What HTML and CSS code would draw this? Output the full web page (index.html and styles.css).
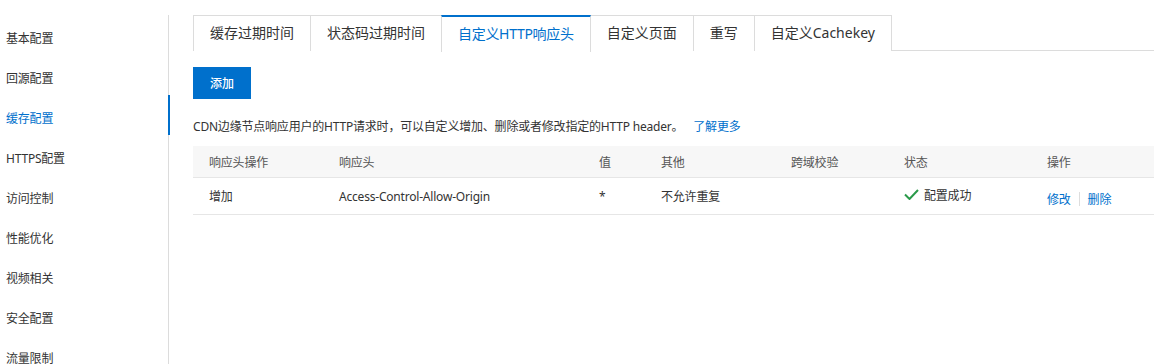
FILE: index.html
```html
<!DOCTYPE html>
<html lang="zh-CN">
<head>
<meta charset="utf-8">
<title>CDN 缓存配置</title>
<link rel="stylesheet" href="styles.css">
</head>
<body>
<div class="page">
  <nav class="sidebar">
    <a class="side-item">基本配置</a>
    <a class="side-item">回源配置</a>
    <a class="side-item active">缓存配置</a>
    <a class="side-item">HTTPS配置</a>
    <a class="side-item">访问控制</a>
    <a class="side-item">性能优化</a>
    <a class="side-item">视频相关</a>
    <a class="side-item">安全配置</a>
    <a class="side-item">流量限制</a>
  </nav>
  <main class="main">
    <div class="tabs">
      <div class="tab">缓存过期时间</div>
      <div class="tab">状态码过期时间</div>
      <div class="tab active">自定义HTTP响应头</div>
      <div class="tab">自定义页面</div>
      <div class="tab">重写</div>
      <div class="tab">自定义Cachekey</div>
    </div>
    <button class="btn-primary">添加</button>
    <p class="desc">CDN边缘节点响应用户的HTTP请求时，可以自定义增加、删除或者修改指定的HTTP header。<a class="link more">了解更多</a></p>
    <div class="table">
      <div class="tr thead">
        <div class="td">响应头操作</div>
        <div class="td">响应头</div>
        <div class="td">值</div>
        <div class="td">其他</div>
        <div class="td">跨域校验</div>
        <div class="td">状态</div>
        <div class="td">操作</div>
      </div>
      <div class="tr tbody">
        <div class="td">增加</div>
        <div class="td">Access-Control-Allow-Origin</div>
        <div class="td">*</div>
        <div class="td">不允许重复</div>
        <div class="td"></div>
        <div class="td status"><svg class="check" width="15" height="11" viewBox="0 0 15 11"><path d="M1 5.5 L5.5 10 L14 1" fill="none" stroke="#2a9a4a" stroke-width="2"/></svg>配置成功</div>
        <div class="td ops"><a class="link">修改</a><span class="sep"></span><a class="link">删除</a></div>
      </div>
    </div>
  </main>
</div>
</body>
</html>
```
FILE: styles.css
```css
* { box-sizing: border-box; }
html, body { margin: 0; padding: 0; background: #fff; }
body {
  font-family: "Noto Sans", "Noto Sans CJK SC", sans-serif;
  font-size: 12px;
  letter-spacing: -0.2px;
  color: #333;
  width: 1154px;
  height: 364px;
  overflow: hidden;
}
.page {
  display: flex;
  padding-top: 15px;
  height: 364px;
}
.sidebar {
  width: 169px;
  flex: none;
  border-right: 1px solid #dcdcdc;
  display: flex;
  flex-direction: column;
}
.side-item {
  position: relative;
  display: block;
  height: 40px;
  padding: 8px 0 0 6px;
  line-height: 32px;
  color: #333;
  font-size: 12px;
}
.side-item.active { color: #0070cc; }
.side-item.active::after {
  content: "";
  position: absolute;
  right: -2px;
  top: 0;
  width: 2px;
  height: 40px;
  background: #0070cc;
}
.main {
  flex: 1;
  padding-left: 24px;
  min-width: 0;
}
.tabs {
  display: flex;
  border-bottom: 1px solid #dcdcdc;
  height: 36px;
}
.tab {
  height: 36px;
  padding: 0 16px;
  border: 1px solid #dcdcdc;
  border-bottom: none;
  margin-right: -1px;
  font-size: 14px;
  letter-spacing: 0;
  line-height: 34px;
  color: #333;
  background: #fff;
}
.tab.active {
  border-top: 2px solid #0070cc;
  line-height: 33px;
  color: #0070cc;
  height: 37px;
  letter-spacing: -0.3px;
  position: relative;
  z-index: 1;
}
.btn-primary {
  display: block;
  margin-top: 16px;
  width: 58px;
  height: 32px;
  border: none;
  background: #0070cc;
  color: #fff;
  font-family: inherit;
  font-size: 12px;
  font-weight: 500;
  letter-spacing: 0;
  padding: 0;
}
.desc {
  margin: 19px 0 0;
  line-height: 18px;
  font-size: 12px;
  color: #333;
}
.link { color: #0070cc; cursor: pointer; }
.more { margin-left: 10px; }
.table {
  margin-top: 10px;
}
.tr {
  display: grid;
  grid-template-columns: 130px 260px 62px 130px 113px 143px 1fr;
  align-items: center;
}
.thead {
  height: 32px;
  background: #f7f7f7;
  border-bottom: 1px solid #e6e6e6;
  color: #555;
}
.tbody {
  height: 37px;
  border-bottom: 1px solid #e6e6e6;
}
.td { padding-left: 16px; white-space: nowrap; }
.status { display: flex; align-items: center; padding-bottom: 3px; }
.check { margin-right: 5px; }
.ops { display: flex; align-items: center; padding-top: 6px; }
.sep {
  display: inline-block;
  width: 1px;
  height: 14px;
  background: #ddd;
  margin: 0 8px;
}
```
